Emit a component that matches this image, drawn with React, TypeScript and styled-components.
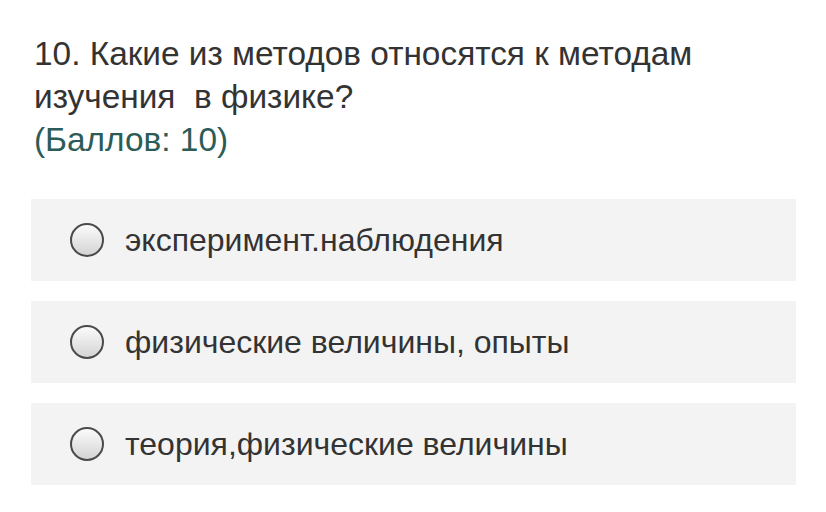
import React from "react";
import styled, { createGlobalStyle } from "styled-components";

const Global = createGlobalStyle`
  html, body { margin: 0; padding: 0; background: #ffffff; }
  body { font-family: "Liberation Sans", Arial, sans-serif; }
`;

const Page = styled.div`
  padding: 32px 30px 0 31px;
  width: 826px;
  box-sizing: border-box;
`;

const Question = styled.div`
  font-size: 33.4px;
  line-height: 43px;
  color: #333333;
  padding-left: 3px;
  margin-bottom: 38px;
`;

const Points = styled.div`
  color: #2b5c57;
`;

const Options = styled.div`
  display: flex;
  flex-direction: column;
  gap: 20px;
  width: 765px;
`;

const Option = styled.label`
  display: flex;
  align-items: center;
  gap: 21px;
  height: 82px;
  padding-left: 39px;
  background: #f3f3f3;
  font-size: 32px;
  color: #333333;
`;

const Radio = styled.span`
  width: 30px;
  height: 30px;
  border-radius: 50%;
  border: 2px solid #4a4a4a;
  background: linear-gradient(#fbfbfb, #d4d4d4);
  flex: none;
`;

const options = [
  "эксперимент.наблюдения",
  "физические величины, опыты",
  "теория,физические величины",
];

export default function App() {
  return (
    <Page>
      <Global />
      <Question>
        10. Какие из методов относятся к методам
        <br />
        изучения&nbsp; в физике?
        <Points>(Баллов: 10)</Points>
      </Question>
      <Options>
        {options.map((o) => (
          <Option key={o}>
            <Radio />
            {o}
          </Option>
        ))}
      </Options>
    </Page>
  );
}
